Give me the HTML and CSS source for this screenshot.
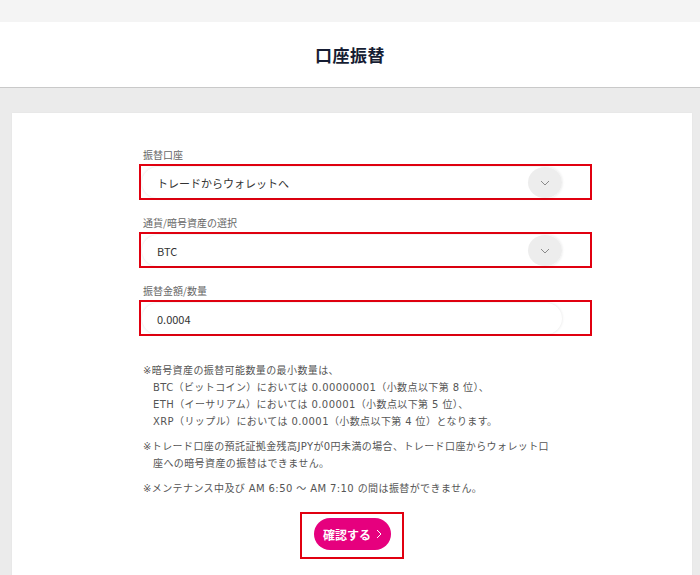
FILE: index.html
```html
<!DOCTYPE html>
<html lang="ja">
<head>
  <meta charset="UTF-8" />
  <meta name="viewport" content="width=device-width, initial-scale=1" />
  <title>口座振替</title>
  <link rel="stylesheet" href="styles.css">
</head>
<body>
  <div class="topbar"></div>
  <header class="page-header">
    <h1>口座振替</h1>
  </header>

  <main class="page">
    <section class="card">
      <form class="form">
        <div class="field">
          <label class="field-label">振替口座</label>
          <div class="mark">
            <div class="pill">
              <span class="pill-text">トレードからウォレットへ</span>
              <span class="chevron">
                <svg width="10" height="6" viewBox="0 0 10 6"><path d="M1 1l4 4 4-4" fill="none" stroke="#8a8a8a" stroke-width="1"/></svg>
              </span>
            </div>
          </div>
        </div>

        <div class="field">
          <label class="field-label">通貨/暗号資産の選択</label>
          <div class="mark">
            <div class="pill">
              <span class="pill-text">BTC</span>
              <span class="chevron">
                <svg width="10" height="6" viewBox="0 0 10 6"><path d="M1 1l4 4 4-4" fill="none" stroke="#8a8a8a" stroke-width="1"/></svg>
              </span>
            </div>
          </div>
        </div>

        <div class="field">
          <label class="field-label">振替金額/数量</label>
          <div class="mark">
            <div class="pill">
              <span class="pill-text">0.0004</span>
            </div>
          </div>
        </div>

        <div class="notes">
          <p>※暗号資産の振替可能数量の最小数量は、<br>
            BTC（ビットコイン）においては 0.00000001（小数点以下第 8 位）、<br>
            ETH（イーサリアム）においては 0.00001（小数点以下第 5 位）、<br>
            XRP（リップル）においては 0.0001（小数点以下第 4 位）となります。</p>
          <p>※トレード口座の預託証拠金残高JPYが0円未満の場合、トレード口座からウォレット口<br>
            座への暗号資産の振替はできません。</p>
          <p>※メンテナンス中及び AM 6:50 ～ AM 7:10 の間は振替ができません。</p>
        </div>

        <div class="actions">
          <div class="mark mark-btn">
            <button type="button" class="confirm">確認する
              <svg width="6" height="10" viewBox="0 0 6 10"><path d="M1 1l4 4-4 4" fill="none" stroke="#fff" stroke-width="1"/></svg>
            </button>
          </div>
        </div>
      </form>
    </section>
  </main>
</body>
</html>
```

FILE: styles.css
```css
/* Reset */
*, *::before, *::after {
  box-sizing: border-box;
}

body {
  margin: 0;
  background: #ebebeb;
  font-family: 'Noto Sans CJK JP', 'Noto Sans', sans-serif;
  color: #333;
  min-height: 100vh;
}

.topbar {
  height: 22px;
  background: #f4f4f4;
}

.page-header {
  height: 66px;
  background: #fff;
  border-bottom: 1px solid #c9c9c9;
  display: flex;
  justify-content: center;
  align-items: center;
}

h1 {
  margin: 0;
  font-size: 17px;
  font-weight: 700;
  color: #161d33;
  letter-spacing: 0.5px;
}

.page {
  padding: 25px 8px 0 12px;
}

.card {
  background: #fff;
  min-height: 470px;
  padding: 35px 0 20px;
  box-shadow: 0 0 2px rgba(0,0,0,0.04);
}

.form {
  width: 420px;
  margin: 0 auto;
}

.field {
  margin-bottom: 16px;
}

.field-label {
  display: block;
  font-size: 10px;
  line-height: 14px;
  color: #666;
  margin: 0 0 2px 1px;
}

/* red annotation frame */
.mark {
  border: 2px solid #e10010;
  margin: 0 -30px 0 -3px;
  padding: 1px 28px 0 1px;
}

.pill {
  height: 31px;
  border-radius: 16px;
  background: #fff;
  box-shadow: 0 0 3px rgba(0,0,0,0.12);
  display: flex;
  align-items: center;
  justify-content: space-between;
  padding-left: 15px;
}

.pill-text {
  font-size: 11px;
  color: #333;
}

.chevron {
  width: 34px;
  height: 31px;
  border-radius: 50%;
  background: #ededed;
  display: flex;
  align-items: center;
  justify-content: center;
}

.notes {
  margin-top: 26px;
  font-family: 'DejaVu Sans', 'Noto Sans CJK JP', sans-serif;
  font-size: 10px;
  line-height: 17px;
  letter-spacing: 0.4px;
  color: #555;
  padding-left: 11px;
}

.notes p {
  margin: 0 0 8px;
  text-indent: -10px;
}

.actions {
  display: flex;
  justify-content: center;
  margin-top: 15px;
}

.mark-btn {
  margin: 0;
  padding: 4px 11px 7px 12px;
}

.confirm {
  height: 32px;
  width: 77px;
  border: none;
  border-radius: 16px;
  background: #e6007e;
  color: #fff;
  font-family: 'Noto Sans CJK JP', sans-serif;
  font-size: 12px;
  font-weight: 700;
  display: flex;
  align-items: center;
  justify-content: center;
  gap: 5px;
  padding: 0;
  cursor: pointer;
}
```
